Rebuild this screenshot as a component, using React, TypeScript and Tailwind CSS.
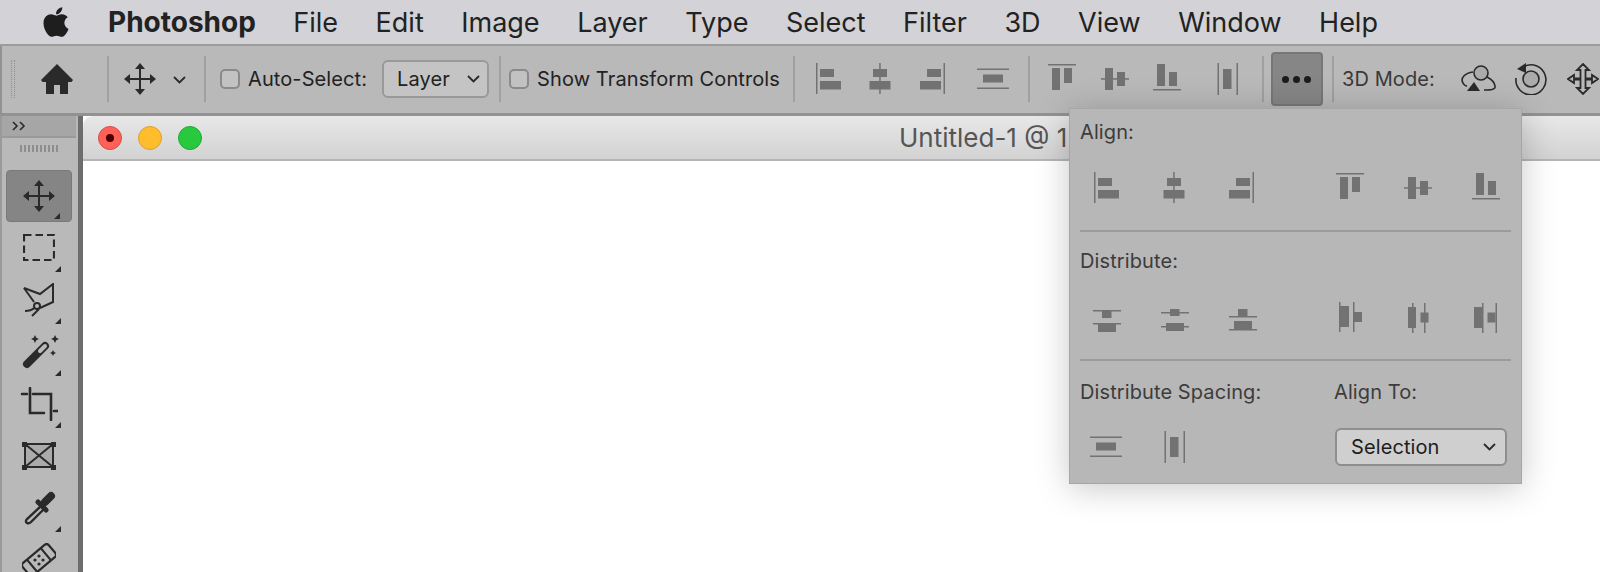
import { FaApple } from 'react-icons/fa'

const GRAY = '#727272'
const DARK = '#2a2a2a'

type IconProps = { className?: string }

const Box = ({ className, children }: IconProps & { children: React.ReactNode }) => (
  <svg width="32" height="32" viewBox="0 0 32 32" fill={GRAY} className={`shrink-0 overflow-visible ${className ?? ''}`}>
    {children}
  </svg>
)

// align icons
const AlignLeft = (p: IconProps) => (
  <Box {...p}>
    <rect x="1" y="0" width="1.5" height="31" />
    <rect x="5" y="6" width="14" height="8" />
    <rect x="5" y="18" width="21" height="8.5" />
  </Box>
)
const AlignCenter = (p: IconProps) => (
  <Box {...p}>
    <rect x="15.2" y="0" width="1.5" height="31" />
    <rect x="9" y="6" width="14" height="8" />
    <rect x="5.5" y="18" width="21" height="8.5" />
  </Box>
)
const AlignRight = (p: IconProps) => (
  <Box {...p}>
    <rect x="29.5" y="0" width="1.5" height="31" />
    <rect x="13" y="6" width="14" height="8" />
    <rect x="6" y="18" width="21" height="8.5" />
  </Box>
)
const SpacingH = (p: IconProps) => (
  <Box {...p}>
    <rect x="0" y="5.5" width="32" height="1.5" />
    <rect x="0" y="24.5" width="32" height="1.5" />
    <rect x="6" y="11.5" width="20" height="8" />
  </Box>
)
const SpacingV = (p: IconProps) => (
  <Box {...p}>
    <rect x="5.5" y="0" width="1.5" height="32" />
    <rect x="24.5" y="0" width="1.5" height="32" />
    <rect x="11" y="6" width="8.5" height="20" />
  </Box>
)
const AlignTop = (p: IconProps) => (
  <Box {...p}>
    <rect x="2" y="1" width="28" height="1.5" />
    <rect x="6" y="5" width="8" height="22" />
    <rect x="18" y="5" width="8" height="15" />
  </Box>
)
const AlignMiddle = (p: IconProps) => (
  <Box {...p}>
    <rect x="2" y="15.2" width="28" height="1.5" />
    <rect x="6" y="5" width="8" height="22" />
    <rect x="18" y="9" width="8" height="14" />
  </Box>
)
const AlignBottom = (p: IconProps) => (
  <Box {...p}>
    <rect x="2" y="26" width="28" height="1.5" />
    <rect x="6" y="1" width="8" height="22" />
    <rect x="18" y="9" width="8" height="14" />
  </Box>
)

// distribute icons
const DistTop = (p: IconProps) => (
  <Box {...p}>
    <rect x="2" y="9" width="28" height="1.5" />
    <rect x="2" y="22" width="28" height="1.5" />
    <rect x="11" y="10" width="9.5" height="7" />
    <rect x="7" y="23" width="18" height="8" />
  </Box>
)
const DistMid = (p: IconProps) => (
  <Box {...p}>
    <rect x="2" y="11" width="28" height="1.5" />
    <rect x="2" y="25" width="28" height="1.5" />
    <rect x="11" y="8" width="9.5" height="7" />
    <rect x="7" y="22" width="18" height="8" />
  </Box>
)
const DistBottom = (p: IconProps) => (
  <Box {...p}>
    <rect x="2" y="15" width="28" height="1.5" />
    <rect x="2" y="28" width="28" height="1.5" />
    <rect x="11" y="8" width="9.5" height="7" />
    <rect x="7" y="20" width="18" height="8" />
  </Box>
)
const DistLeft = (p: IconProps) => (
  <Box {...p}>
    <rect x="7" y="1" width="1.5" height="30" />
    <rect x="21" y="1" width="1.5" height="30" />
    <rect x="8" y="5" width="9" height="21" />
    <rect x="22" y="11" width="8" height="10" />
  </Box>
)
const DistCenter = (p: IconProps) => (
  <Box {...p}>
    <rect x="10" y="2" width="1.5" height="30" />
    <rect x="22" y="2" width="1.5" height="30" />
    <rect x="6" y="6" width="8" height="21" />
    <rect x="18.5" y="11.5" width="8" height="10" />
  </Box>
)
const DistRight = (p: IconProps) => (
  <Box {...p}>
    <rect x="12" y="2" width="1.5" height="30" />
    <rect x="25.5" y="2" width="1.5" height="30" />
    <rect x="4" y="6" width="8" height="21" />
    <rect x="17.5" y="11.5" width="8" height="10" />
  </Box>
)

const MoveIcon = ({ className }: IconProps) => (
  <svg width="32" height="32" viewBox="0 0 32 32" fill={DARK} className={`shrink-0 ${className ?? ''}`}>
    <rect x="15" y="5" width="2" height="22" />
    <rect x="5" y="15" width="22" height="2" />
    <path d="M16 0l5 6H11zM16 32l-5-6h10zM0 16l6-5v10zM32 16l-6 5V11z" />
  </svg>
)

const Chevron = ({ className }: IconProps) => (
  <svg width="13" height="8" viewBox="0 0 13 8" fill="none" stroke={DARK} strokeWidth="1.8" className={`shrink-0 ${className ?? ''}`}>
    <path d="M1 1l5.5 5.5L12 1" />
  </svg>
)

const Separator = ({ className }: IconProps) => <div className={`h-[46px] w-[2px] shrink-0 bg-[#a0a0a0] ${className ?? ''}`} />

const Checkbox = ({ className }: IconProps) => (
  <div className={`h-[20px] w-[20px] shrink-0 rounded-[5px] border-2 border-[#8a8a8a] bg-[#c2c2c2] ${className ?? ''}`} />
)

const Corner = () => (
  <svg width="6" height="6" viewBox="0 0 6 6" fill={DARK} className="absolute bottom-[2px] right-[11px]">
    <path d="M6 0v6H0z" />
  </svg>
)

const Tool = ({ children, corner = true, active = false }: { children: React.ReactNode; corner?: boolean; active?: boolean }) => (
  <div className={`relative flex h-[52px] w-[66px] shrink-0 items-center justify-center rounded-[4px] ${active ? 'border border-[#7a7a7a] bg-[#858585]' : ''}`}>
    {children}
    {corner && <Corner />}
  </div>
)

const Tools = () => (
  <div className="ml-[4px] mt-[18px] flex flex-col">
    <Tool active>
      <MoveIcon />
    </Tool>
    <Tool>
      <svg width="32" height="28" viewBox="0 0 32 28" fill="none" stroke={DARK} strokeWidth="2.2" strokeDasharray="7.5 4">
        <rect x="1" y="1" width="30" height="25" />
      </svg>
    </Tool>
    <Tool>
      <svg width="34" height="34" viewBox="0 0 34 34" fill="none" stroke={DARK} strokeWidth="2">
        <path d="M2 5l16 6L31 1v18L18 25" />
        <path d="M2 5l10 14" />
        <circle cx="15" cy="23" r="3" />
        <path d="M3 28c3 0 7-1 9-3M10 33l7-7" />
      </svg>
    </Tool>
    <Tool>
      <svg width="34" height="34" viewBox="0 0 34 34" fill={DARK} className="overflow-visible">
        <path d="M5 29L23 11" stroke={DARK} strokeWidth="8" strokeLinecap="round" />
        <path d="M18 16l5-5" stroke="#b9b9b9" strokeWidth="4" strokeLinecap="round" />
        <path d="M13 0l1.3 2.7L17 4l-2.7 1.3L13 8l-1.3-2.7L9 4l2.700-1.300zM33 0l1.3 2.7L37 4l-2.7 1.3L33 8l-1.3-2.7L29 4l2.700-1.300zM31 15l1 2 2 1-2 1-1 2-1-2-2-1 2-1z" />
      </svg>
    </Tool>
    <Tool>
      <svg width="38" height="34" viewBox="0 0 38 34" fill="none" stroke={DARK} strokeWidth="2.6" strokeLinecap="round">
        <path d="M10 1v25h14M13 7h18v26M2 7h5M34 24h4" />
      </svg>
    </Tool>
    <Tool corner={false}>
      <svg width="34" height="28" viewBox="0 0 34 28" fill="#ababab" stroke={DARK} strokeWidth="2">
        <rect x="3" y="2" width="28" height="23" />
        <path d="M3 2l28 23M31 2L3 25" />
        <g fill={DARK} stroke="none">
          <rect x="0" y="0" width="5" height="5" />
          <rect x="29" y="0" width="5" height="5" />
          <rect x="0" y="23" width="5" height="5" />
          <rect x="29" y="23" width="5" height="5" />
        </g>
      </svg>
    </Tool>
    <Tool>
      <svg width="34" height="34" viewBox="0 0 34 34" fill="none" stroke={DARK}>
        <path d="M18 16L5 28c-3 3 1 6 4 3l13-13" strokeWidth="2.4" />
        <path d="M16 11l8 8" strokeWidth="5" strokeLinecap="round" />
        <path d="M23 11l6-6" strokeWidth="8" strokeLinecap="round" />
      </svg>
    </Tool>
    <Tool corner={false}>
      <svg width="34" height="34" viewBox="0 0 34 34" fill="none" stroke={DARK} strokeWidth="2.2">
        <g transform="rotate(-40 17 17)">
          <rect x="0" y="9" width="34" height="16" rx="3" />
          <path d="M8 9v16M26 9v16" />
        </g>
        <g fill={DARK} stroke="none">
          <circle cx="17" cy="13" r="1.6" />
          <circle cx="21" cy="17" r="1.6" />
          <circle cx="13" cy="17" r="1.6" />
          <circle cx="17" cy="21" r="1.6" />
        </g>
      </svg>
    </Tool>
  </div>
)

const MENU = ['File', 'Edit', 'Image', 'Layer', 'Type', 'Select', 'Filter', '3D', 'View', 'Window', 'Help']

const AlignPopover = () => (
  <div className="absolute left-[1069px] top-[108px] h-[376px] w-[453px] border border-[#a6a6a6] bg-[#b7b7b7] text-[20px] tracking-[0.1px] text-[#3c3c3c] shadow-[0_4px_32px_rgba(0,0,0,0.22)]">
    <div className="ml-[10px] mt-[11px] leading-[24px]">Align:</div>
    <div className="mt-[28px] flex">
      <AlignLeft className="ml-[23px]" />
      <AlignCenter className="ml-[33px]" />
      <AlignRight className="ml-[33px]" />
      <AlignTop className="ml-[79px]" />
      <AlignMiddle className="ml-[36px]" />
      <AlignBottom className="ml-[36px]" />
    </div>
    <div className="ml-[10px] mr-[10px] mt-[26px] h-[2px] bg-[#9b9b9b]" />
    <div className="ml-[10px] mt-[17px] leading-[24px]">Distribute:</div>
    <div className="mt-[28px] flex">
      <DistTop className="ml-[21px]" />
      <DistMid className="ml-[36px]" />
      <DistBottom className="ml-[36px]" />
      <DistLeft className="ml-[73px]" />
      <DistCenter className="ml-[38px]" />
      <DistRight className="ml-[36px]" />
    </div>
    <div className="ml-[10px] mr-[10px] mt-[26px] h-[2px] bg-[#9b9b9b]" />
    <div className="ml-[10px] mt-[19px] flex whitespace-nowrap leading-[24px]">
      <span className="w-[254px]">Distribute Spacing:</span>
      <span>Align To:</span>
    </div>
    <div className="mt-[24px] flex items-center">
      <SpacingH className="ml-[20px]" />
      <SpacingV className="ml-[37px]" />
      <div className="ml-[144px] flex h-[38px] w-[172px] items-center justify-between rounded-[6px] border-2 border-[#8e8e8e] bg-[#cfcfcf] pl-[14px] pr-[9px] text-[#1d1d1d]">
        Selection
        <Chevron />
      </div>
    </div>
  </div>
)

export default function App() {
  return (
    <div className="relative flex h-[572px] w-[1600px] flex-col overflow-hidden bg-[#b8b8b8] font-['Inter',sans-serif] text-[#222]">
      {/* macOS menu bar */}
      <div className="flex h-[46px] shrink-0 items-center border-b-2 border-[#9c9c9c] bg-[#d2d2d7] pl-[41px] text-[27px] leading-none">
        <FaApple className="h-[34px] w-[30px] shrink-0 text-[#1e1e1e]" />
        <span className="ml-[37px] text-[28px] font-bold">Photoshop</span>
        {MENU.map(label => (
          <span key={label} className="ml-[37.5px]">
            {label}
          </span>
        ))}
      </div>

      {/* options bar */}
      <div className="flex h-[70px] shrink-0 items-center whitespace-nowrap border-b-[3px] border-l-2 border-[#929292] bg-[#b9b9b9] pb-[1px] text-[20px] tracking-[0.1px]">
        <div className="ml-[9px] h-[38px] w-[4px] border-x border-dotted border-[#8e8e8e]" />
        <svg width="32" height="30" viewBox="0 0 32 30" fill={DARK} className="ml-[26px] shrink-0">
          <path d="M16 0L0 16l1.5 2H5v12h8v-9h6v9h8V18h3.5l1.5-2z" />
        </svg>
        <Separator className="ml-[34px]" />
        <MoveIcon className="ml-[15px]" />
        <Chevron className="ml-[17px] mt-[2px]" />
        <Separator className="ml-[18px]" />
        <Checkbox className="ml-[14px]" />
        <span className="ml-[8px]">Auto-Select:</span>
        <div className="ml-[15px] flex h-[38px] w-[107px] shrink-0 items-center justify-between rounded-[6px] border-2 border-[#999] bg-[#c4c4c4] pl-[13px] pr-[7px]">
          Layer
          <Chevron />
        </div>
        <Separator className="ml-[10px]" />
        <Checkbox className="ml-[8px]" />
        <span className="ml-[8px]">Show Transform Controls</span>
        <Separator className="ml-[13px]" />
        <AlignLeft className="ml-[20px]" />
        <AlignCenter className="ml-[17.5px]" />
        <AlignRight className="ml-[17.5px]" />
        <SpacingH className="ml-[31px]" />
        <Separator className="ml-[19px]" />
        <AlignTop className="ml-[16px]" />
        <AlignMiddle className="ml-[21px]" />
        <AlignBottom className="ml-[20.5px]" />
        <SpacingV className="ml-[28.5px]" />
        <Separator className="ml-[18px]" />
        <div className="ml-[7px] flex h-[54px] w-[52px] shrink-0 items-center justify-center gap-[4px] rounded-[4px] border-2 border-[#777] bg-[#868686]">
          <span className="h-[7px] w-[7px] rounded-full bg-[#1c1c1c]" />
          <span className="h-[7px] w-[7px] rounded-full bg-[#1c1c1c]" />
          <span className="h-[7px] w-[7px] rounded-full bg-[#1c1c1c]" />
        </div>
        <Separator className="ml-[9px]" />
        <span className="ml-[8px] text-[#3a3a3a]">3D Mode:</span>
        <svg width="38" height="28" viewBox="0 0 38 28" fill="none" stroke={DARK} strokeWidth="1.6" className="ml-[26px] shrink-0">
          <path d="M12 7C4 8-1 13 2 18c1 2 3 3 4 3M23 25c6 0 12 0 11-4-.5-3-4-7-8-9" />
          <circle cx="20" cy="8" r="7" fill="#ababab" />
          <path d="M13 17l6 9H6z" fill={DARK} stroke="none" />
        </svg>
        <svg width="32" height="32" viewBox="0 0 32 32" fill="none" stroke={DARK} strokeWidth="1.6" className="ml-[16px] shrink-0">
          <path d="M9 3.500A15 15 0 1 1 1 15" />
          <circle cx="16" cy="16" r="8" fill="#ababab" />
          <path d="M11 0L2 6l9 4z" fill={DARK} stroke="none" />
        </svg>
        <svg width="32" height="32" viewBox="0 0 32 32" fill="none" stroke={DARK} strokeWidth="1.8" className="ml-[20px] shrink-0">
          <path d="M16 1l6 6h-3.500v8.500H25V12l6 4-6 4v-3.500h-6.500V25H22l-6 6-6-6h3.500v-8.500H7V20l-6-4 6-4v3.500h6.500V7H10z" />
        </svg>
      </div>

      {/* tools + document */}
      <div className="flex min-h-0 flex-1">
        <div className="flex w-[76px] shrink-0 flex-col border-l-2 border-[#9a9a9a] bg-[#b9b9b9]">
          <div className="flex h-[22px] shrink-0 items-center border-b-2 border-[#9a9a9a] bg-[#a6a6a6] pl-[10px]">
            <svg width="14" height="10" viewBox="0 0 14 10" fill="none" stroke={DARK} strokeWidth="1.6">
              <path d="M1 1l4 4-4 4M8 1l4 4-4 4" />
            </svg>
          </div>
          <div className="ml-[18px] mt-[7px] h-[7px] w-[38px] shrink-0 bg-[repeating-linear-gradient(90deg,#8e8e8e_0,#8e8e8e_2px,transparent_2px,transparent_4px)]" />
          <Tools />
        </div>
        <div className="ml-[2px] w-[5px] shrink-0 bg-[#6d6d6d]" />
        <div className="flex min-w-0 flex-1 flex-col bg-white">
          <div className="relative flex h-[45px] shrink-0 items-center rounded-tl-[10px] border-b-2 border-[#b5b5b5] bg-gradient-to-b from-[#e8e8e8] to-[#d2d2d2] pl-[15px]">
            <span className="h-[24px] w-[24px] rounded-full border border-[#d94c44] bg-[#ff6159] p-[7px]">
              <span className="block h-[8px] w-[8px] rounded-full bg-[#4d0000]" />
            </span>
            <span className="ml-[16px] h-[24px] w-[24px] rounded-full border border-[#dca02a] bg-[#ffbd2e]" />
            <span className="ml-[16px] h-[24px] w-[24px] rounded-full border border-[#1eaa35] bg-[#28c93f]" />
            <span className="ml-[697px] shrink-0 whitespace-nowrap text-[26px] text-[#555]">Untitled-1 @ 1</span>
          </div>
        </div>
      </div>

      <AlignPopover />
    </div>
  )
}
